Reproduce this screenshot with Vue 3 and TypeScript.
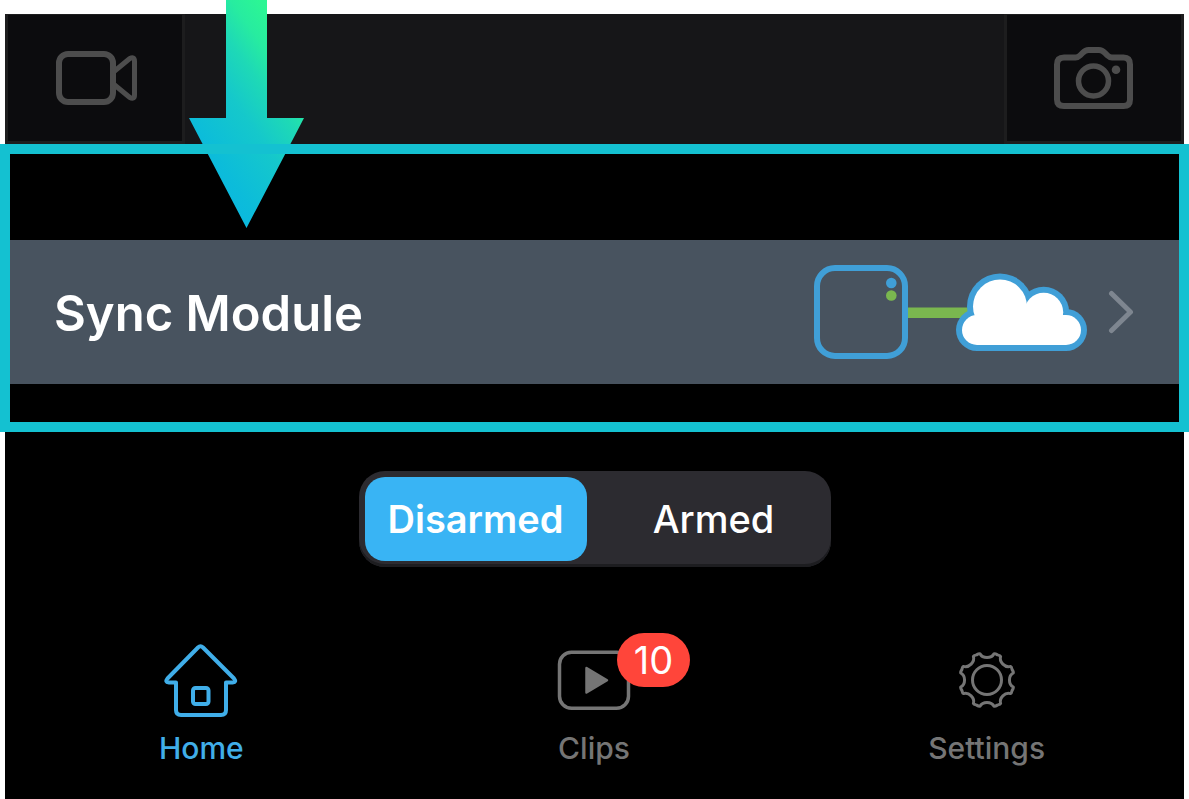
<script setup lang="ts">
import { ref } from 'vue'

type Mode = 'Disarmed' | 'Armed'
const modes: Mode[] = ['Disarmed', 'Armed']
const mode = ref<Mode>('Disarmed')
const clipCount = ref(10)

function polar(radius: number, degrees: number): string {
  const a = (degrees * Math.PI) / 180
  return `${(37 + radius * Math.cos(a)).toFixed(2)} ${(37 + radius * Math.sin(a)).toFixed(2)}`
}

// Eight-toothed gear outline: a short crown per tooth, then a concave valley.
function gearOutline(): string {
  let d = `M${polar(27.2, 15)}`
  for (let i = 0; i < 8; i++) {
    const a = 22.5 + i * 45
    d += `Q${polar(27.9, a - 6)} ${polar(27.2, a)}`
    d += `Q${polar(27.9, a + 6)} ${polar(27.2, a + 7.5)}`
    d += `C${polar(21.6, a + 11)} ${polar(21.6, a + 34)} ${polar(27.2, a + 37.5)}`
  }
  return d + 'Z'
}
const gearPath = gearOutline()
</script>

<template>
  <main class="screen">
    <div class="toolbar">
      <button class="tool" type="button" aria-label="Live video">
        <svg width="86" height="54" viewBox="-4 0 86 54" fill="none" stroke="#4d4d4d" stroke-linejoin="round">
          <rect x="3" y="3" width="54" height="48" rx="9" stroke-width="6" />
          <path d="M58 20.5 73.5 7.8Q78.5 5 78.5 10V44Q78.5 49 73.5 46.2L58 33.5" stroke-width="5" />
        </svg>
      </button>
      <button class="tool" type="button" aria-label="Take photo">
        <svg width="80" height="62" viewBox="0 0 80 62" fill="none" stroke="#4d4d4d">
          <path
            d="M3 17.5Q3 10.5 10 10.5H21.5Q24 10.5 26 8.5L28.5 6Q31.5 3 34.5 3H45Q48 3 51 6L53.5 8.5Q55.5 10.5 58 10.5H69.5Q76 10.5 76 17.5V52.5Q76 59 69.5 59H10Q3 59 3 52.5Z"
            stroke-width="6"
          />
          <circle cx="39.5" cy="34" r="15" stroke-width="5.5" />
          <circle cx="62" cy="22.7" r="4.3" fill="#4d4d4d" stroke="none" />
        </svg>
      </button>
    </div>

    <section class="highlight">
      <a class="sync-row" href="#sync-module">
        <span class="sync-title">Sync Module</span>
        <svg class="sync-art" width="273" height="94" viewBox="0 0 273 94" aria-hidden="true">
          <rect x="93" y="42.5" width="64" height="10.5" fill="#7ab74f" />
          <rect x="3" y="3" width="88" height="88" rx="18" fill="none" stroke="#409fd7" stroke-width="6" />
          <circle cx="77.3" cy="18" r="5.3" fill="#409fd7" />
          <circle cx="77.3" cy="30.5" r="5.3" fill="#7ab74f" />
          <g fill="#409fd7">
            <circle cx="163" cy="65" r="21" />
            <circle cx="252" cy="65" r="21" />
            <circle cx="186" cy="41.5" r="33" />
            <circle cx="229.7" cy="47.3" r="25.5" />
            <rect x="163" y="44" width="89" height="42" />
          </g>
          <g fill="#fff">
            <circle cx="163" cy="65" r="15" />
            <circle cx="252" cy="65" r="15" />
            <circle cx="186" cy="41.5" r="27" />
            <circle cx="229.7" cy="47.3" r="19.5" />
            <rect x="163" y="50" width="89" height="30" />
          </g>
        </svg>
        <svg class="chevron" width="26" height="44" viewBox="0 0 26 44" fill="none" aria-hidden="true">
          <path d="M3.5 3.5 22.5 22 3.5 40.5" stroke="#7e8690" stroke-width="5" stroke-linecap="round" stroke-linejoin="round" />
        </svg>
      </a>
    </section>

    <div class="modes" role="radiogroup" aria-label="System mode">
      <label v-for="m in modes" :key="m" class="mode" :class="{ active: m === mode }">
        <input v-model="mode" type="radio" name="mode" :value="m" />
        <span>{{ m }}</span>
      </label>
    </div>

    <nav class="tabs">
      <a class="tab current" href="#home" aria-current="page">
        <span class="tab-icon">
          <svg width="74" height="74" viewBox="0 0 74 74" fill="none" stroke="currentColor" stroke-width="4" stroke-linejoin="round">
            <path d="M12 39.5V67Q12 72 17 72H57Q62 72 62 67V39.5H68.5Q73 39 70 35.5L39 4.5Q36.5 2 34 4.5L3.5 35.5Q.5 39 5 39.5Z" />
            <rect x="29" y="45" width="15.5" height="16" rx="2.5" />
          </svg>
        </span>
        <span>Home</span>
      </a>
      <a class="tab" href="#clips">
        <span class="tab-icon">
          <svg width="74" height="74" viewBox="0 0 74 74" fill="none" stroke="currentColor">
            <rect x="2.5" y="9.3" width="69" height="56" rx="12" stroke-width="3.5" />
            <path d="M29.5 25 50 37.2 29.5 49.5Z" fill="currentColor" stroke-width="2.5" stroke-linejoin="round" />
          </svg>
          <span class="badge">{{ clipCount }}</span>
        </span>
        <span>Clips</span>
      </a>
      <a class="tab" href="#settings">
        <span class="tab-icon">
          <svg width="74" height="74" viewBox="0 0 74 74" fill="none" stroke="currentColor" stroke-width="3" stroke-linejoin="round">
            <path :d="gearPath" />
            <circle cx="37" cy="37" r="14.5" />
          </svg>
        </span>
        <span>Settings</span>
      </a>
    </nav>

    <svg class="pointer" width="116" height="228" viewBox="0 0 116 228" aria-hidden="true">
      <defs>
        <linearGradient id="pointer-fill" gradientUnits="userSpaceOnUse" x1="78" y1="10" x2="-52" y2="104">
          <stop offset="0" stop-color="#2cf694" />
          <stop offset="0.15" stop-color="#27eca0" />
          <stop offset="0.3" stop-color="#1ed9b6" />
          <stop offset="0.5" stop-color="#15c8cb" />
          <stop offset="0.8" stop-color="#0cbcda" />
          <stop offset="1" stop-color="#0ab6e2" />
        </linearGradient>
      </defs>
      <path d="M37 0H78V118H115L57.5 228 0 118H37Z" fill="url(#pointer-fill)" />
    </svg>
  </main>
</template>

<style>
body {
  margin: 0;
  background: #fff;
}
</style>

<style scoped>
.screen {
  position: relative;
  box-sizing: border-box;
  display: flex;
  flex-direction: column;
  min-height: 100vh;
  padding: 0 5px;
  border-top: 14px solid #fff;
  background: #000 content-box;
  font-family: Inter, "Liberation Sans", sans-serif;
}
.toolbar {
  display: flex;
  justify-content: space-between;
  height: 130px;
  background: #161618;
}
.tool {
  display: flex;
  align-items: center;
  justify-content: center;
  box-sizing: border-box;
  width: 180px;
  padding: 0;
  border: 3px solid #1d1d1e;
  border-top-width: 1px;
  background: #0c0c0e;
}
.highlight {
  position: relative;
  padding: 96px 0 48px;
}
.highlight::after {
  content: "";
  position: absolute;
  inset: 0 -5px;
  z-index: 2;
  border: 10px solid #14c1d1;
  pointer-events: none;
}
.sync-row {
  display: flex;
  align-items: center;
  height: 144px;
  padding: 0 50px 0 49px;
  background: #48535f;
  color: #fff;
  text-decoration: none;
}
.sync-title {
  flex: 1;
  padding-top: 4px;
  font-size: 49px;
  font-weight: 600;
  line-height: 60px;
}
.chevron {
  margin-left: 21px;
}
.modes {
  display: grid;
  grid-template-columns: 1fr 1fr;
  gap: 16px;
  box-sizing: border-box;
  width: 472px;
  max-width: 100%;
  margin: 39px auto 0;
  padding: 6px;
  border-radius: 26px;
  background: #2c2b30;
  box-shadow: inset 0 -3px #1d1d20;
}
.mode {
  display: flex;
  align-items: center;
  justify-content: center;
  position: relative;
  height: 84px;
  border-radius: 20px;
  color: #fff;
  font-size: 38px;
  font-weight: 500;
}
.mode.active {
  background: #39b4f4;
  font-weight: 600;
}
.mode input {
  position: absolute;
  inset: 0;
  width: 100%;
  height: 100%;
  margin: 0;
  opacity: 0;
}
.tabs {
  display: grid;
  grid-template-columns: repeat(3, 1fr);
  padding: 76px 1px 0 0;
}
.tab {
  display: flex;
  flex-direction: column;
  align-items: center;
  gap: 13px;
  color: #757575;
  font-size: 30px;
  font-weight: 500;
  line-height: 36px;
  text-decoration: none;
}
.tab.current {
  color: #40aee9;
}
.tab-icon {
  position: relative;
  display: flex;
}
.badge {
  position: absolute;
  top: -10px;
  left: 60px;
  min-width: 73px;
  border-radius: 27px;
  background: #ff453a;
  color: #fff;
  font-size: 38px;
  font-weight: 400;
  line-height: 54px;
  text-align: center;
}
.pointer {
  position: absolute;
  top: -14px;
  left: 189px;
  z-index: 1;
}
</style>
